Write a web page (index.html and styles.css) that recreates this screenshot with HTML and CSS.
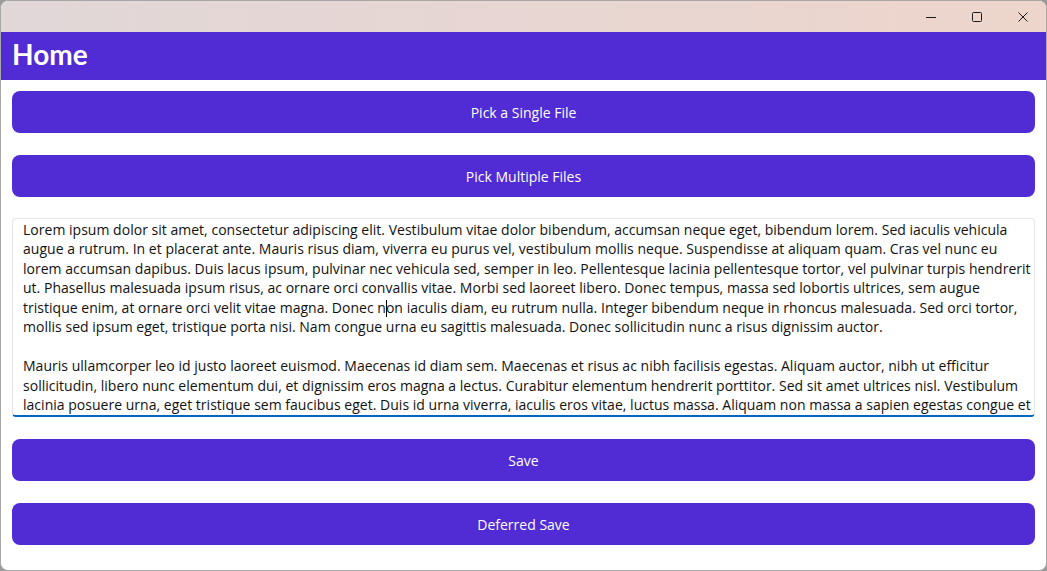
FILE: index.html
```html
<!DOCTYPE html>
<html lang="en">
<head>
<meta charset="utf-8">
<title>Home</title>
<link rel="stylesheet" href="styles.css">
</head>
<body>
<div class="window">
  <div class="titlebar">
    <div class="caption-buttons">
      <span class="cap-btn" aria-label="Minimize">
        <svg width="10" height="10" viewBox="0 0 10 10"><path d="M0 5.5h10" stroke="#1a1a1a" stroke-width="1"/></svg>
      </span>
      <span class="cap-btn" aria-label="Maximize">
        <svg width="10" height="10" viewBox="0 0 10 10"><rect x="0.5" y="0.5" width="9" height="9" rx="1" fill="none" stroke="#1a1a1a" stroke-width="1"/></svg>
      </span>
      <span class="cap-btn" aria-label="Close">
        <svg width="10" height="10" viewBox="0 0 10 10"><path d="M0.5 0.5L9.5 9.5M9.5 0.5L0.5 9.5" stroke="#1a1a1a" stroke-width="1"/></svg>
      </span>
    </div>
  </div>
  <header class="appbar"><h1 class="page-title">Home</h1></header>
  <main class="content">
    <button class="btn">Pick a Single File</button>
    <button class="btn">Pick Multiple Files</button>
    <div class="editor">
      <div class="editor-text">
        <span class="line">Lorem ipsum dolor sit amet, consectetur adipiscing elit. Vestibulum vitae dolor bibendum, accumsan neque eget, bibendum lorem. Sed iaculis vehicula</span>
        <span class="line">augue a rutrum. In et placerat ante. Mauris risus diam, viverra eu purus vel, vestibulum mollis neque. Suspendisse at aliquam quam. Cras vel nunc eu</span>
        <span class="line">lorem accumsan dapibus. Duis lacus ipsum, pulvinar nec vehicula sed, semper in leo. Pellentesque lacinia pellentesque tortor, vel pulvinar turpis hendrerit</span>
        <span class="line">ut. Phasellus malesuada ipsum risus, ac ornare orci convallis vitae. Morbi sed laoreet libero. Donec tempus, massa sed lobortis ultrices, sem augue</span>
        <span class="line">tristique enim, at ornare orci velit vitae magna. Donec n<span class="caret"></span>on iaculis diam, eu rutrum nulla. Integer bibendum neque in rhoncus malesuada. Sed orci tortor,</span>
        <span class="line">mollis sed ipsum eget, tristique porta nisi. Nam congue urna eu sagittis malesuada. Donec sollicitudin nunc a risus dignissim auctor.</span>
        <span class="line"></span>
        <span class="line">Mauris ullamcorper leo id justo laoreet euismod. Maecenas id diam sem. Maecenas et risus ac nibh facilisis egestas. Aliquam auctor, nibh ut efficitur</span>
        <span class="line">sollicitudin, libero nunc elementum dui, et dignissim eros magna a lectus. Curabitur elementum hendrerit porttitor. Sed sit amet ultrices nisl. Vestibulum</span>
        <span class="line">lacinia posuere urna, eget tristique sem faucibus eget. Duis id urna viverra, iaculis eros vitae, luctus massa. Aliquam non massa a sapien egestas congue et</span>
      </div>
    </div>
    <button class="btn">Save</button>
    <button class="btn">Deferred Save</button>
  </main>
</div>
</body>
</html>
```

FILE: styles.css
```css
* { box-sizing: border-box; }
html, body { margin: 0; padding: 0; }
body {
  width: 1047px;
  height: 571px;
  background: #9a9a9a;
  overflow: hidden;
  font-family: "Open Sans", "Liberation Sans", sans-serif;
}
.window {
  width: 1047px;
  height: 571px;
  border: 1px solid #a8a8a8;
  border-radius: 8px;
  background: #ffffff;
  overflow: hidden;
  display: flex;
  flex-direction: column;
}
.titlebar {
  height: 31px;
  flex: none;
  background: linear-gradient(90deg, #e1d7d8 0%, #e8d6d2 55%, #edd5cb 100%);
  display: flex;
  justify-content: flex-end;
}
.caption-buttons { display: flex; }
.cap-btn {
  width: 46px;
  height: 31px;
  display: flex;
  align-items: center;
  justify-content: center;
}
.appbar {
  height: 48px;
  flex: none;
  background: #512bd4;
  display: flex;
  align-items: center;
  padding-left: 11px;
}
.page-title {
  margin: 0;
  color: #ffffff;
  font-family: "Lato", "Open Sans", sans-serif;
  font-weight: 700;
  font-size: 28px;
  line-height: 1;
  position: relative;
  top: -2px;
}
.content {
  flex: 1;
  padding: 11px 11px 0;
  display: flex;
  flex-direction: column;
  gap: 22px;
}
.btn {
  height: 42px;
  width: 100%;
  border: none;
  border-radius: 8px;
  background: #512bd4;
  color: #ffffff;
  font-family: "Open Sans", sans-serif;
  font-size: 14px;
  padding: 0;
  flex: none;
}
.editor {
  margin-top: -1px;
  height: 199px;
  flex: none;
  border: 1px solid #e6e6e6;
  border-bottom: 2px solid #0067c0;
  border-radius: 4px;
  overflow: hidden;
  padding: 1px 10px 0;
  background: #ffffff;
}
.editor-text {
  font-size: 14px;
  line-height: 19.45px;
  letter-spacing: 0.02px;
  color: #111111;
}
.line { display: block; white-space: nowrap; height: 19.45px; }
.caret {
  display: inline-block;
  width: 1px;
  height: 17px;
  background: #000;
  vertical-align: -4px;
  margin-right: -1px;
}
```
